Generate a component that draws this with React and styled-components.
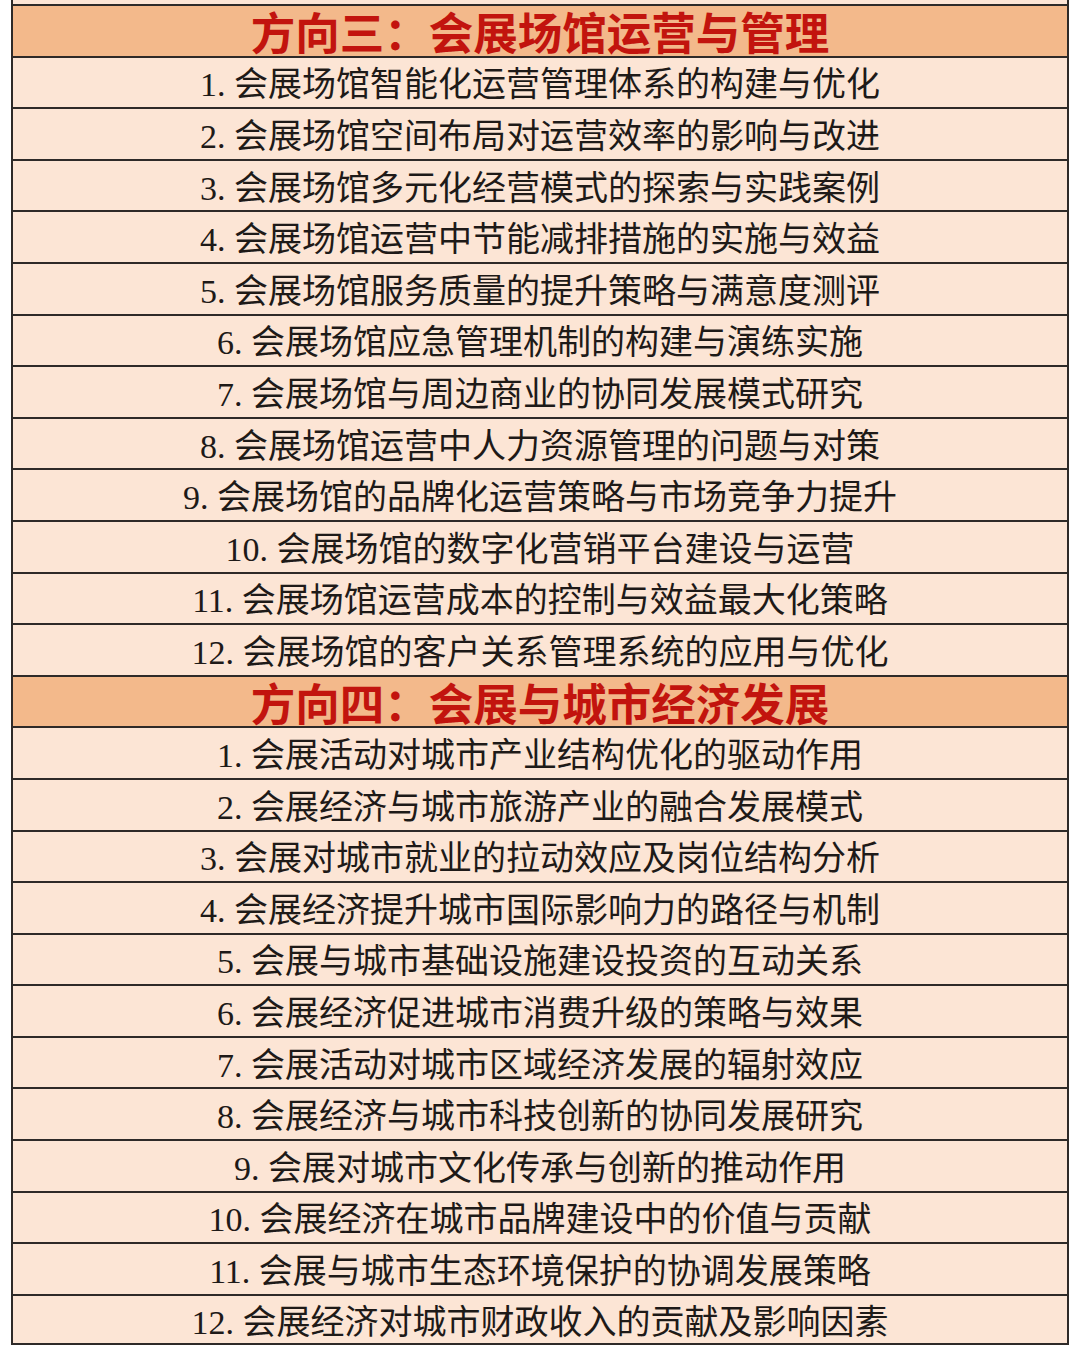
import React from 'react'
import styled, { createGlobalStyle } from 'styled-components'

const GlobalStyle = createGlobalStyle`
  html, body {
    margin: 0;
    padding: 0;
    background: #ffffff;
  }
  body {
    font-family: "Liberation Serif", "Noto Sans CJK SC", serif;
  }
`

const Page = styled.div`
  width: 1080px;
  height: 1346px;
  overflow: hidden;
  padding: 0 11px;
  box-sizing: border-box;
`

const Sheet = styled.div`
  display: flex;
  flex-direction: column;
  border-left: 2px solid #2e2a28;
  border-right: 2px solid #2e2a28;
  background: #fce5d5;
`

const CutRow = styled.div`
  height: 4px;
  background: #fce5d5;
`

const Row = styled.div`
  display: flex;
  align-items: center;
  justify-content: center;
  box-sizing: border-box;
  height: 51.6px;
  border-top: 2px solid #2e2a28;
  background: ${props => props.header ? '#f3b98b' : '#fce5d5'};
  color: ${props => props.header ? '#c2140e' : '#1e1a18'};
  font-size: ${props => props.header ? '44.5px' : '34px'};
  font-weight: ${props => props.header ? 700 : 400};
  line-height: 1;
  white-space: nowrap;
  padding-top: ${props => props.header ? '9px' : '6px'};
  &:last-child {
    border-bottom: 2px solid #2e2a28;
  }
`

const sections = [
  {
    title: '方向三：会展场馆运营与管理',
    items: [
      '会展场馆智能化运营管理体系的构建与优化',
      '会展场馆空间布局对运营效率的影响与改进',
      '会展场馆多元化经营模式的探索与实践案例',
      '会展场馆运营中节能减排措施的实施与效益',
      '会展场馆服务质量的提升策略与满意度测评',
      '会展场馆应急管理机制的构建与演练实施',
      '会展场馆与周边商业的协同发展模式研究',
      '会展场馆运营中人力资源管理的问题与对策',
      '会展场馆的品牌化运营策略与市场竞争力提升',
      '会展场馆的数字化营销平台建设与运营',
      '会展场馆运营成本的控制与效益最大化策略',
      '会展场馆的客户关系管理系统的应用与优化',
    ],
  },
  {
    title: '方向四：会展与城市经济发展',
    items: [
      '会展活动对城市产业结构优化的驱动作用',
      '会展经济与城市旅游产业的融合发展模式',
      '会展对城市就业的拉动效应及岗位结构分析',
      '会展经济提升城市国际影响力的路径与机制',
      '会展与城市基础设施建设投资的互动关系',
      '会展经济促进城市消费升级的策略与效果',
      '会展活动对城市区域经济发展的辐射效应',
      '会展经济与城市科技创新的协同发展研究',
      '会展对城市文化传承与创新的推动作用',
      '会展经济在城市品牌建设中的价值与贡献',
      '会展与城市生态环境保护的协调发展策略',
      '会展经济对城市财政收入的贡献及影响因素',
    ],
  },
]

const App = () => <>
  <GlobalStyle />
  <Page>
    <Sheet>
      <CutRow />
      {sections.map(section => (
        <React.Fragment key={section.title}>
          <Row header>{section.title}</Row>
          {section.items.map((item, i) => (
            <Row key={item}>{`${i + 1}. ${item}`}</Row>
          ))}
        </React.Fragment>
      ))}
    </Sheet>
  </Page>
</>

export default App
